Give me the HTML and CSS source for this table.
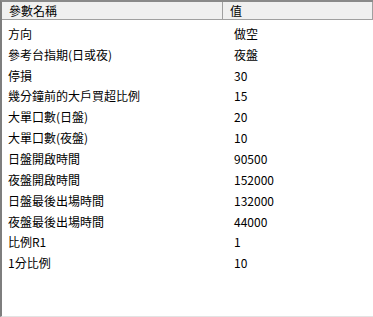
FILE: index.html
```html
<!DOCTYPE html>
<html lang="zh-Hant">
<head>
<meta charset="utf-8">
<link rel="stylesheet" href="styles.css">
</head>
<body>
<div class="grid">
  <div class="head">
    <div class="hcell name">參數名稱</div>
    <div class="hcell val">值</div>
  </div>
  <div class="rows">
    <div class="row"><span class="name">方向</span><span class="val">做空</span></div>
    <div class="row"><span class="name">參考台指期(日或夜)</span><span class="val">夜盤</span></div>
    <div class="row"><span class="name">停損</span><span class="val">30</span></div>
    <div class="row"><span class="name">幾分鐘前的大戶買超比例</span><span class="val">15</span></div>
    <div class="row"><span class="name">大單口數(日盤)</span><span class="val">20</span></div>
    <div class="row"><span class="name">大單口數(夜盤)</span><span class="val">10</span></div>
    <div class="row"><span class="name">日盤開啟時間</span><span class="val">90500</span></div>
    <div class="row"><span class="name">夜盤開啟時間</span><span class="val">152000</span></div>
    <div class="row"><span class="name">日盤最後出場時間</span><span class="val">132000</span></div>
    <div class="row"><span class="name">夜盤最後出場時間</span><span class="val">44000</span></div>
    <div class="row"><span class="name">比例R1</span><span class="val">1</span></div>
    <div class="row"><span class="name">1分比例</span><span class="val">10</span></div>
  </div>
</div>
</body>
</html>
```

FILE: styles.css
```css
html, body {
  margin: 0;
  padding: 0;
  background: #ffffff;
}
.grid {
  width: 371px;
  height: 314px;
  border-top: 2px solid #8a8a8a;
  border-left: 2px solid #7e7e7e;
  border-bottom: 1px solid #e3e3e3;
  display: flex;
  flex-direction: column;
  font-family: "Noto Sans CJK TC", "Microsoft JhengHei", sans-serif;
  font-size: 12px;
  color: #000;
  overflow: hidden;
}
.head {
  display: flex;
  height: 17px;
  background: #f0f0f0;
  border-bottom: 1px solid #a0a0a0;
  border-right: 1px solid #a0a0a0;
}
.hcell {
  display: flex;
  align-items: center;
  padding-left: 7px;
  line-height: 17px;
}
.hcell.name {
  width: 213px;
  border-right: 1px solid #a0a0a0;
}
.hcell.val {
  flex: 1;
}
.rows {
  display: flex;
  flex-direction: column;
  padding-top: 3px;
}
.row {
  display: flex;
  height: 20.85px;
  align-items: center;
}
.row .name {
  width: 220px;
  padding-left: 6px;
}
.row .val {
  padding-left: 6px;
}
```
